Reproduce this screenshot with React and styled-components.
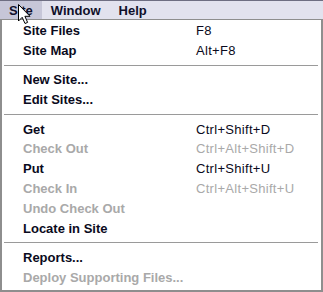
import React from 'react'
import styled, { createGlobalStyle } from 'styled-components';

const GlobalStyle = createGlobalStyle`
    html, body {
        margin: 0;
        padding: 0;
        background: #ffffff;
    }
    body {
        font-family: "Liberation Sans", Arial, sans-serif;
    }
`;

const menuItems = [
    { label: 'Site Files', keys: 'F8' },
    { label: 'Site Map', keys: 'Alt+F8' },
    'sep',
    { label: 'New Site...' },
    { label: 'Edit Sites...' },
    'sep',
    { label: 'Get', keys: 'Ctrl+Shift+D' },
    { label: 'Check Out', keys: 'Ctrl+Alt+Shift+D', disabled: true },
    { label: 'Put', keys: 'Ctrl+Shift+U' },
    { label: 'Check In', keys: 'Ctrl+Alt+Shift+U', disabled: true },
    { label: 'Undo Check Out', disabled: true },
    { label: 'Locate in Site' },
    'sep',
    { label: 'Reports...' },
    { label: 'Deploy Supporting Files...', disabled: true },
];

function Cursor() {
    return (
        <CursorStyled width="14" height="21" viewBox="0 0 14 21">
            <path d="M0.5 0.5 L0.5 17 L4.2 13.3 L7 19.5 L9.6 18.4 L6.9 12.3 L12 12.3 Z"
                fill="#ffffff" stroke="#000000" strokeWidth="1" strokeLinejoin="miter"/>
        </CursorStyled>
    )
}

function App() {
    return (
        <Page>
            <GlobalStyle/>
            <MenuBar>
                <TopMenu active>Site</TopMenu>
                <TopMenu>Window</TopMenu>
                <TopMenu>Help</TopMenu>
                <Cursor/>
            </MenuBar>
            <Dropdown>
                {menuItems.map((item, i) => item === 'sep'
                    ? <Separator key={i}/>
                    : (
                        <Row key={i} disabled={item.disabled}>
                            <Label>{item.label}</Label>
                            <Keys>{item.keys}</Keys>
                        </Row>
                    ))}
            </Dropdown>
        </Page>
    )
}

const Page = styled.div`
    width: 323px;
    height: 292px;
    overflow: hidden;
    position: relative;
`;

const MenuBar = styled.div`
    position: relative;
    height: 18px;
    display: flex;
    align-items: stretch;
    background: #e2e2ee;
    border-top: 1px solid #6e6e82;
`;

const TopMenu = styled.div`
    padding: 0 9px;
    display: flex;
    align-items: center;
    font-size: 13px;
    font-weight: bold;
    color: #10102a;
    background: ${p => p.active ? '#c6c6d8' : 'transparent'};
`;

const CursorStyled = styled.svg`
    position: absolute;
    left: 18px;
    top: 3px;
`;

const Dropdown = styled.div`
    height: 273px;
    box-sizing: border-box;
    background: #ffffff;
    border-top: 1px solid #8e8e8e;
    border-left: 2px solid #8e8e8e;
    border-right: 2px solid #8e8e8e;
    border-bottom: 2px solid #8e8e8e;
    padding: 1px 0 0 0;
`;

const Row = styled.div`
    height: 19.8px;
    display: flex;
    align-items: center;
    padding-left: 21px;
    font-size: 13px;
    color: ${p => p.disabled ? '#a9a9a9' : '#0a0a20'};
`;

const Label = styled.span`
    width: 173px;
    font-weight: bold;
`;

const Keys = styled.span`
    font-weight: normal;
    letter-spacing: 0.3px;
`;

const Separator = styled.div`
    height: 1px;
    background: #9a9a9a;
    margin: 4px 3px 4.5px 2px;
`;

export default App;
